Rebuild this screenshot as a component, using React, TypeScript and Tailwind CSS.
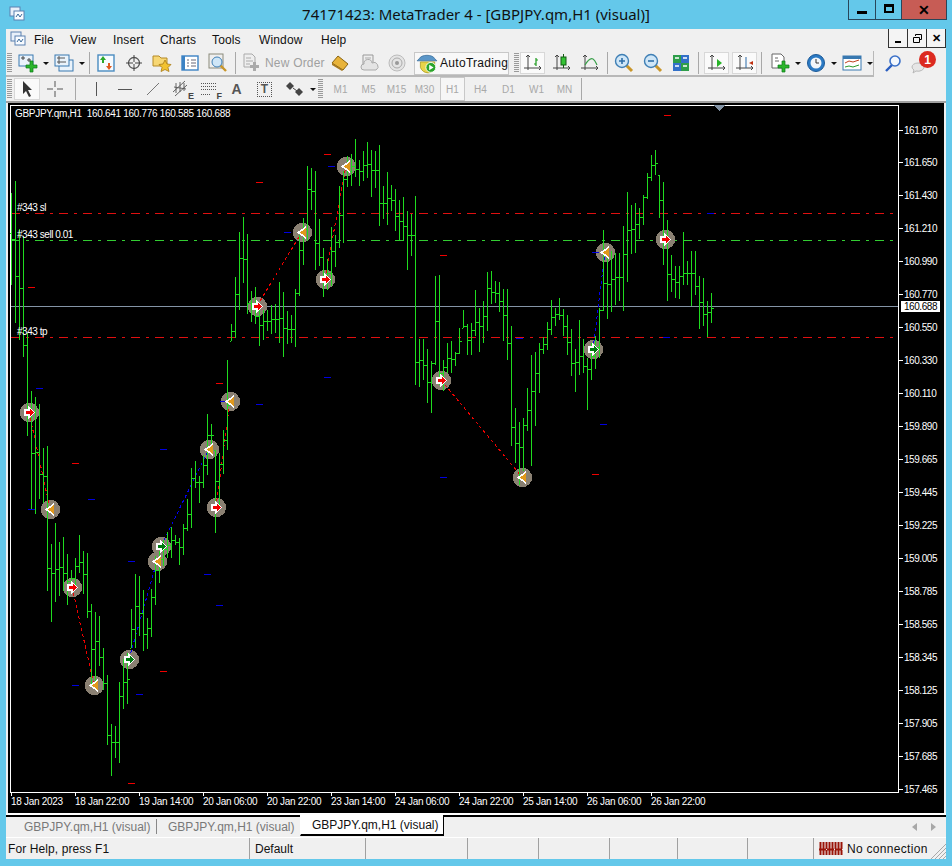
import type { ReactNode } from 'react'

const bars: [number, number][] = [
    [195, 287], [183, 325], [231, 342], [238, 359], [335, 438], [393, 511], [399, 516], [406, 501], [450, 505], [448, 593],
    [546, 624], [525, 604], [544, 598], [539, 593], [556, 607], [572, 593], [560, 587], [537, 575], [553, 596], [555, 620],
    [606, 687], [614, 692], [618, 668], [650, 692], [677, 747], [726, 778], [728, 760], [684, 765], [661, 711], [655, 706],
    [611, 650], [576, 650], [578, 638], [592, 653], [620, 651], [591, 639], [558, 607], [553, 585], [542, 568], [534, 560],
    [529, 560], [537, 547], [540, 567], [526, 557], [501, 533], [470, 530], [463, 490], [478, 505], [457, 490], [416, 477],
    [426, 447], [452, 535], [455, 510], [432, 476], [362, 452], [326, 343], [279, 340], [234, 312], [219, 285], [236, 316],
    [293, 324], [289, 326], [310, 348], [312, 342], [312, 333], [307, 336], [306, 335], [284, 345], [294, 359], [313, 346],
    [317, 345], [291, 349], [237, 298], [220, 267], [168, 242], [170, 212], [173, 272], [221, 268], [250, 299], [261, 292],
    [229, 288], [237, 269], [188, 250], [173, 245], [158, 189], [156, 188], [141, 179], [162, 188], [153, 183], [144, 180],
    [152, 199], [153, 190], [147, 228], [188, 221], [174, 227], [187, 213], [191, 233], [202, 243], [199, 243], [213, 272],
    [216, 258], [198, 387], [341, 389], [341, 382], [351, 405], [363, 415], [278, 367], [277, 387], [362, 393], [345, 375],
    [343, 375], [354, 368], [330, 356], [312, 330], [326, 357], [325, 357], [292, 338], [310, 354], [303, 345], [274, 333],
    [273, 306], [283, 305], [284, 314], [291, 343], [291, 362], [328, 448], [410, 465], [424, 487], [420, 473], [390, 433],
    [357, 468], [354, 428], [345, 395], [339, 356], [324, 352], [302, 337], [310, 328], [300, 322], [311, 338], [317, 357],
    [331, 378], [351, 394], [322, 377], [341, 375], [360, 412], [345, 382], [338, 371], [310, 360], [232, 313], [257, 321],
    [253, 314], [255, 307], [255, 303], [228, 313], [194, 284], [207, 256], [205, 255], [210, 241], [197, 227], [175, 201],
    [157, 183], [152, 177], [177, 220], [184, 267], [222, 303], [257, 294], [268, 300], [268, 301], [234, 287], [263, 287],
    [253, 308], [253, 297], [278, 331], [280, 328], [303, 339], [295, 325],
]

const prices = [
    ['161.870', 132], ['161.650', 164], ['161.430', 197], ['161.210', 230], ['160.990', 263], ['160.770', 296], ['160.550', 329],
    ['160.330', 362], ['160.110', 395], ['159.890', 428], ['159.665', 461], ['159.445', 494], ['159.225', 527], ['159.005', 560],
    ['158.785', 593], ['158.565', 626], ['158.345', 659], ['158.125', 692], ['157.905', 725], ['157.685', 758], ['157.465', 791],
] as const

const times = [
    '18 Jan 2023', '18 Jan 22:00', '19 Jan 14:00', '20 Jan 06:00', '20 Jan 22:00', '23 Jan 14:00', '24 Jan 06:00', '24 Jan 22:00',
    '25 Jan 14:00', '26 Jan 06:00', '26 Jan 22:00',
]

const redMarks = [[28, 289], [256, 184], [324, 156], [440, 257], [72, 465], [216, 385], [160, 673], [128, 785], [664, 117], [592, 476]]
const blueMarks = [
    [328, 168], [284, 234], [36, 390], [88, 501], [28, 511], [160, 451], [128, 563], [204, 576], [220, 403], [216, 607], [72, 687],
    [136, 696], [324, 379], [256, 406], [707, 215], [663, 339], [592, 254], [516, 340], [600, 426], [440, 479],
]

const sellTrades = [[29, 414, 50, 511], [72, 589, 94, 687], [216, 509, 230, 403], [257, 308, 302, 234], [325, 281, 346, 168], [441, 382, 522, 479]]
const buyTrades = [[129, 661, 157, 563], [161, 548, 209, 451], [593, 351, 605, 254]]

const redArrows = [[29, 414], [72, 589], [216, 509], [257, 308], [325, 281], [441, 382], [665, 241]]
const orangeArrows = [[50, 511], [94, 687], [157, 563], [209, 451], [230, 403], [302, 234], [346, 168], [522, 479], [605, 254]]
const greenArrows = [[161, 548], [129, 661], [593, 351]]

function barsPath() {
    let d = ''
    let prevClose = bars[0][0] + 40
    bars.forEach(([high, low], i) => {
        const x = 11 + i * 4
        const next = bars[i + 1] ?? [high, low]
        const top = Math.max(high, next[0])
        const bottom = Math.min(low, next[1])
        const close = Math.round(top < bottom ? (top + bottom) / 2 : (high + low) / 2)
        const open = Math.min(low, Math.max(high, prevClose))
        d += `M${x}.5 ${high}V${low}M${x - 1} ${open}.5h1M${x + 1} ${close}.5h2`
        prevClose = close
    })
    return d
}

function RightArrow({ x, y, color }: { x: number; y: number; color: string }) {
    return (
        <g transform={`translate(${x} ${y})`} shapeRendering="crispEdges">
            <polygon points="-5,-3 -1,-3 -1,-6 6,0.5 -1,7 -1,4 -5,4" fill="#fff" />
            <polygon points="-3,-1 1,-1 1,-3 5,0.5 1,4 1,2 -3,2" fill={color} />
        </g>
    )
}

function LeftArrow({ x, y }: { x: number; y: number }) {
    return (
        <g transform={`translate(${x} ${y})`} shapeRendering="crispEdges">
            <polygon points="4,-6 4,7 -5,0.5" fill="#fff" />
            <polygon points="4,-4 4,5 -2,0.5" fill="#e0981c" />
        </g>
    )
}

function Chart() {
    return (
        <svg width="936" height="710" viewBox="8 105 936 710" className="block bg-black" fontFamily="'Liberation Sans', sans-serif">
            <g shapeRendering="crispEdges">
                <path d="M10.5 107V794.5H898.5V107M10 107.5H899" fill="none" stroke="#fff" />
                {prices.map(([, y]) => (
                    <path key={y} d={`M899 ${y}.5h4`} stroke="#fff" />
                ))}
                {times.map((_, i) => (
                    <path key={i} d={`M${11 + i * 64}.5 795v3`} stroke="#fff" />
                ))}

                <path d="M11 215.5H894" stroke="#e01010" strokeDasharray="9 6 3 6" />
                <path d="M11 242.5H894" stroke="#32cd32" strokeDasharray="9 6 3 6" />
                <path d="M11 339.5H894" stroke="#e01010" strokeDasharray="9 6 3 6" />
                <path d="M11 308.5H898" stroke="#8494a6" />
                <polygon points="714,107 725,107 719.5,113" fill="#8494a6" />

                {[...redArrows, ...orangeArrows, ...greenArrows].map(([x, y]) => (
                    <circle key={`${x}-${y}`} cx={x + 0.5} cy={y + 0.5} r="9.6" fill="#8a8072" />
                ))}
                {sellTrades.map(([x1, y1, x2, y2]) => (
                    <line key={x1} x1={x1} y1={y1} x2={x2} y2={y2} stroke="#f00000" strokeDasharray="3 3" />
                ))}
                {buyTrades.map(([x1, y1, x2, y2]) => (
                    <line key={x1} x1={x1} y1={y1} x2={x2} y2={y2} stroke="#0000f0" strokeDasharray="3 3" />
                ))}

                <path d={barsPath()} stroke="#1fdc1f" fill="none" />

                {redMarks.map(([x, y]) => (
                    <path key={`${x}-${y}`} d={`M${x} ${y}.5h7`} stroke="#f00000" />
                ))}
                {blueMarks.map(([x, y]) => (
                    <path key={`${x}-${y}`} d={`M${x} ${y}.5h7`} stroke="#0000e0" />
                ))}
            </g>

            {redArrows.map(([x, y]) => (
                <RightArrow key={x} x={x} y={y} color="#f00000" />
            ))}
            {greenArrows.map(([x, y]) => (
                <RightArrow key={x} x={x} y={y} color="#007a10" />
            ))}
            {orangeArrows.map(([x, y]) => (
                <LeftArrow key={x} x={x} y={y} />
            ))}

            <g fill="#fff" fontSize="10" letterSpacing="-0.45">
                <text x="15" y="119" letterSpacing="-0.3">GBPJPY.qm,H1&#160; 160.641 160.776 160.585 160.688</text>
                <text x="17" y="213">#343 sl</text>
                <text x="17" y="240">#343 sell 0.01</text>
                <text x="17" y="337">#343 tp</text>
                {prices.map(([p, y]) => (
                    <text key={p} x="904" y={y + 4}>{p}</text>
                ))}
                {times.map((t, i) => (
                    <text key={t} x={11 + i * 64} y="807" letterSpacing="-0.3">{t}</text>
                ))}
                <rect x="901" y="303" width="39" height="11" />
                <text x="904" y="312" fill="#000">160.688</text>
            </g>
        </svg>
    )
}

function Ico({ children, size = 20 }: { children: ReactNode; size?: number }) {
    return (
        <svg width={size} height={size} viewBox="0 0 20 20" className="block shrink-0">
            {children}
        </svg>
    )
}

const Axes = () => (
    <path d="M5 2v15M1 15h17M3 4l2-2 2 2M16 13l2 2-2 2" fill="none" stroke="#444" strokeWidth="1" />
)

function PlusGreen({ x = 0, y = 0 }: { x?: number; y?: number }) {
    return (
        <path
            transform={`translate(${x} ${y})`}
            d="M6 0h3v4h4v3H9v4H6V7H2V4h4z"
            fill="#2bb52b"
            stroke="#0a7a18"
            strokeWidth="0.7"
        />
    )
}

function Magnifier({ minus }: { minus?: boolean }) {
    return (
        <Ico>
            <path d="M12 12l6 6" stroke="#c9962a" strokeWidth="3" />
            <circle cx="8" cy="8" r="6.5" fill="#cfe6f7" stroke="#3f7fb5" strokeWidth="1.4" />
            <path d={minus ? 'M5 8h6' : 'M5 8h6M8 5v6'} stroke="#2f6fa8" strokeWidth="1.6" />
        </Ico>
    )
}

const icons = {
    chartAdd: (
        <Ico>
            <rect x="1" y="2" width="14" height="11" fill="#eaf3fb" stroke="#3878b0" />
            <path d="M3 5h4M5 3v4M9 7h4M11 5v4" stroke="#444" />
            <PlusGreen x={6} y={8} />
        </Ico>
    ),
    profiles: (
        <Ico>
            <rect x="5" y="7" width="14" height="11" fill="#eaf3fb" stroke="#3878b0" />
            <rect x="1" y="2" width="14" height="11" fill="#eaf3fb" stroke="#3878b0" />
            <path d="M3 5h8M3 9h9M5 3v8" stroke="#555" />
        </Ico>
    ),
    market: (
        <Ico>
            <rect x="2" y="2" width="16" height="16" fill="#f6fbff" stroke="#4a8cc0" strokeWidth="1.4" />
            <path d="M7 3l3 4H8v3H6V7H4z" fill="#2aa82a" />
            <path d="M13 17l-3-4h2v-3h2v3h2z" fill="#e05a20" />
        </Ico>
    ),
    crosshair: (
        <Ico>
            <circle cx="10" cy="10" r="5.5" fill="none" stroke="#555" strokeWidth="1.3" />
            <path d="M10 2v7M10 11v7M2 10h7M11 10h7" stroke="#444" />
        </Ico>
    ),
    folder: (
        <Ico>
            <path d="M1 3h6l2 2h6v8H1z" fill="#f7d774" stroke="#b58a26" />
            <path d="M13 7l2 4 4 .5-3 3 1 4-4-2-4 2 1-4-3-3 4-.5z" fill="#f2c230" stroke="#a87a14" strokeWidth="0.8" />
        </Ico>
    ),
    terminal: (
        <Ico>
            <rect x="2" y="3" width="16" height="14" fill="#fff" stroke="#3b82c4" strokeWidth="1.4" />
            <rect x="2" y="3" width="3" height="14" fill="#3b82c4" />
            <path d="M7 7h2M11 7h5M7 10h2M11 10h5M7 13h2M11 13h5" stroke="#667" />
        </Ico>
    ),
    tester: (
        <Ico>
            <rect x="1" y="1" width="14" height="14" fill="#eee" stroke="#8a8a7a" />
            <path d="M12 12l6 6" stroke="#c9962a" strokeWidth="2.4" />
            <circle cx="9" cy="9" r="5" fill="#cfe6f7" stroke="#3f7fb5" />
        </Ico>
    ),
    newOrder: (
        <Ico>
            <path d="M2 1h8l3 3v10H2z" fill="#eee" stroke="#aaa" />
            <path d="M4 5h5M4 8h7M4 11h4" stroke="#aaa" />
            <path d="M11 9h3v3h3v3h-3v3h-3v-3H8v-3h3z" fill="#aaa" />
        </Ico>
    ),
    goldBox: (
        <Ico>
            <path d="M8 3l10 8-5 6L2 10z" fill="#e8b33a" stroke="#8a6410" />
            <path d="M2 10l11 7-1 1L2 12z" fill="#a87a20" />
        </Ico>
    ),
    cloudDoc: (
        <Ico>
            <path d="M4 2h10v10H4z" fill="#eee" stroke="#999" />
            <path d="M6 5h6M6 8h6" stroke="#aaa" />
            <path d="M5 17a3 3 0 010-6 4 4 0 018-1 3.5 3.5 0 014 7z" fill="#e4e4e4" stroke="#aaa" />
        </Ico>
    ),
    signal: (
        <Ico>
            <circle cx="10" cy="10" r="8" fill="#e4e4e4" stroke="#bbb" />
            <circle cx="10" cy="10" r="5" fill="none" stroke="#aaa" />
            <circle cx="10" cy="10" r="2" fill="#999" />
        </Ico>
    ),
    auto: (
        <Ico size={22}>
            <path d="M3 6c2-4 12-4 14 0l2 2H1z" fill="#5a96c8" stroke="#3a6e9c" strokeWidth="0.7" />
            <path d="M4 9h13v6c-2 3-4 4-6 4-3 0-6-2-7-5z" fill="#e8d44a" stroke="#a89a20" strokeWidth="0.7" />
            <circle cx="13.5" cy="14" r="4.5" fill="#2aa52a" stroke="#fff" strokeWidth="0.8" />
            <path d="M12 11.5l4 2.5-4 2.5z" fill="#fff" />
        </Ico>
    ),
    barChart: (
        <Ico>
            <Axes />
            <path d="M13 5v8M11 11h2M13 7h2" stroke="#1c9a1c" strokeWidth="1.2" fill="none" />
        </Ico>
    ),
    candle: (
        <Ico>
            <Axes />
            <rect x="9" y="4" width="5" height="8" fill="#34c334" stroke="#145a14" />
            <path d="M11.5 1v3M11.5 12v3" stroke="#145a14" />
        </Ico>
    ),
    line: (
        <Ico>
            <Axes />
            <path d="M5 12c3-5 6-7 8-6s3 4 4 6" fill="none" stroke="#3aa04a" strokeWidth="1.2" />
        </Ico>
    ),
    tile: (
        <Ico>
            <rect x="2" y="2" width="8" height="8" fill="#2e9e4a" />
            <rect x="10" y="2" width="8" height="8" fill="#3270c8" />
            <rect x="2" y="10" width="8" height="8" fill="#3270c8" />
            <rect x="10" y="10" width="8" height="8" fill="#2e9e4a" />
            <path d="M4 5h4M12 5h4M4 13h4M12 13h4" stroke="#fff" strokeWidth="1.5" />
        </Ico>
    ),
    autoScroll: (
        <Ico>
            <Axes />
            <path d="M10 6l5 4-5 4z" fill="#28b428" />
        </Ico>
    ),
    shift: (
        <Ico>
            <Axes />
            <path d="M11 4v11" stroke="#2a6aa8" />
            <path d="M18 8l-4 2 4 2z" fill="#c03010" />
        </Ico>
    ),
    template: (
        <Ico>
            <path d="M2 1h9l3 3v11H2z" fill="#fff" stroke="#666" />
            <path d="M5 5h3M5 8h4" stroke="#666" />
            <PlusGreen x={6} y={8} />
        </Ico>
    ),
    clock: (
        <Ico>
            <circle cx="10" cy="10" r="8.5" fill="#2b7ac4" stroke="#1c5a98" />
            <circle cx="10" cy="10" r="5.5" fill="#f2f6fa" />
            <path d="M10 6v4h3" fill="none" stroke="#333" />
        </Ico>
    ),
    indicator: (
        <Ico>
            <rect x="1" y="3" width="18" height="14" fill="#fff" stroke="#3878b0" />
            <rect x="1" y="3" width="18" height="3" fill="#3878b0" />
            <path d="M3 10l4-2 4 1 6-2" fill="none" stroke="#c04020" />
            <path d="M3 14l4-1 4 1 6-2" fill="none" stroke="#2a9a2a" />
        </Ico>
    ),
    search: (
        <Ico>
            <path d="M9 11l-6 6" stroke="#2a5ec0" strokeWidth="2.4" />
            <circle cx="12" cy="7" r="5" fill="#f4f8fd" stroke="#3a70c8" strokeWidth="1.6" />
        </Ico>
    ),
    cursor: (
        <Ico>
            <path d="M6 2l9 9h-4l3 6-2 1-3-6-3 3z" fill="#333" />
        </Ico>
    ),
    thinCross: (
        <Ico>
            <path d="M10 2v6M10 12v6M2 10h6M12 10h6" stroke="#555" />
        </Ico>
    ),
    vline: (
        <Ico>
            <path d="M10.5 3v14" stroke="#555" />
        </Ico>
    ),
    hline: (
        <Ico>
            <path d="M3 10.5h14" stroke="#555" />
        </Ico>
    ),
    trend: (
        <Ico>
            <path d="M4 16L16 4" stroke="#777" />
        </Ico>
    ),
    updown: (
        <Ico>
            <path d="M5 3l4 4-4 4-4-4z" fill="#444" />
            <path d="M14 9l4 4-4 4-4-4z" fill="#444" />
            <path d="M8 9l4 3" stroke="#444" />
        </Ico>
    ),
}

function Caret() {
    return <span className="ml-[5px] h-0 w-0 border-x-[3px] border-t-[3px] border-x-transparent border-t-[#111]" />
}

function Tool({ w, children, active }: { w: string; children: ReactNode; active?: boolean }) {
    return (
        <div
            className={`flex h-[22px] shrink-0 items-center justify-center ${w} ${active ? 'border border-[#d8d8d8] bg-[#fafafa]' : ''}`}
        >
            {children}
        </div>
    )
}

function Sep({ w = 'w-[6px]' }: { w?: string }) {
    return (
        <div className={`flex h-[22px] shrink-0 justify-center ${w}`}>
            <div className="w-px bg-[#a8a8a8]" />
        </div>
    )
}

function Grip() {
    return (
        <div className="h-[20px] w-[5px] shrink-0 bg-[repeating-linear-gradient(to_bottom,#9a9a9a_0,#9a9a9a_1px,transparent_1px,transparent_2px)]" />
    )
}

function ToolbarOne() {
    return (
        <div className="flex h-[26px] items-center">
            <div className="flex h-[26px] w-[868px] items-center border-r border-b-2 border-[#b8b8b8]">
                <div className="ml-px"><Grip /></div>
                <Tool w="w-[36px] pl-[6px]">{icons.chartAdd}<Caret /></Tool>
                <Tool w="w-[38px] pl-[4px]">{icons.profiles}<Caret /></Tool>
                <Sep />
                <Tool w="w-[28px]">{icons.market}</Tool>
                <Tool w="w-[28px]">{icons.crosshair}</Tool>
                <Tool w="w-[28px]">{icons.folder}</Tool>
                <Tool w="w-[28px]">{icons.terminal}</Tool>
                <Tool w="w-[28px]">{icons.tester}</Tool>
                <Sep />
                <Tool w="w-[88px] justify-start pl-[4px] gap-[3px] text-[#a0a0a0] tracking-[0.2px]">
                    {icons.newOrder}
                    <span>New Order</span>
                </Tool>
                <Tool w="w-[28px]">{icons.goldBox}</Tool>
                <Tool w="w-[29px]">{icons.cloudDoc}</Tool>
                <Tool w="w-[28px]">{icons.signal}</Tool>
                <div className="ml-[3px] flex h-[23px] w-[95px] shrink-0 items-center gap-[2px] border border-[#c8c8c8] bg-[#f8f8f8] pl-[1px] text-[#111] tracking-[0.3px]">
                    {icons.auto}
                    <span>AutoTrading</span>
                </div>
                <div className="ml-[5px] mr-[1px]"><Grip /></div>
                <Tool w="w-[25px]" active>{icons.barChart}</Tool>
                <Tool w="w-[28px] ml-[3px]">{icons.candle}</Tool>
                <Tool w="w-[28px]">{icons.line}</Tool>
                <Sep />
                <Tool w="w-[28px]"><Magnifier /></Tool>
                <Tool w="w-[29px]"><Magnifier minus /></Tool>
                <Tool w="w-[28px]">{icons.tile}</Tool>
                <Sep w="w-[6px]" />
                <Tool w="w-[25px] ml-[3px]" active>{icons.autoScroll}</Tool>
                <Tool w="w-[25px] ml-[3px]" active>{icons.shift}</Tool>
                <Sep w="w-[9px]" />
                <Tool w="w-[34px] pl-[4px]">{icons.template}<Caret /></Tool>
                <Tool w="w-[36px] pl-[6px]">{icons.clock}<Caret /></Tool>
                <Tool w="w-[36px] pl-[6px]">{icons.indicator}<Caret /></Tool>
            </div>
            <div className="ml-[9px]">{icons.search}</div>
            <div className="relative ml-[8px] h-[24px] w-[30px]">
                <svg width="14" height="12" viewBox="0 0 14 12" className="absolute left-0 top-[10px]">
                    <path d="M1 5a6 4 0 0112 0 6 4 0 01-8 4l-3 2 1-3a5 4 0 01-2-3z" fill="#e6e6e6" stroke="#b8b8b8" />
                </svg>
                <div className="absolute left-[8px] top-[-1px] flex h-[17px] w-[17px] items-center justify-center rounded-full bg-[#dc2a20] text-[12px] font-bold text-white">
                    1
                </div>
            </div>
        </div>
    )
}

function Period({ label, active }: { label: string; active?: boolean }) {
    return (
        <div
            className={`flex h-[24px] w-[25px] shrink-0 items-center justify-center text-[10px] text-[#a8a8a8] ${active ? 'border border-[#c8c8c8] bg-[#f6f6f6]' : ''}`}
        >
            {label}
        </div>
    )
}

function ToolbarTwo() {
    return (
        <div className="flex h-[26px] items-center border-b-2 border-[#a0a0a0]">
            <div className="ml-px"><Grip /></div>
            <Tool w="w-[26px] ml-[2px]" active>{icons.cursor}</Tool>
            <Tool w="w-[28px] ml-[1px]">{icons.thinCross}</Tool>
            <Sep w="w-[8px] ml-[2px]" />
            <Tool w="w-[29px] ml-[2px]">{icons.vline}</Tool>
            <Tool w="w-[29px]">{icons.hline}</Tool>
            <Tool w="w-[28px]">{icons.trend}</Tool>
            <Tool w="w-[28px]">
                <div className="relative h-[20px] w-[20px]">
                    <svg width="20" height="20" viewBox="0 0 20 20" className="block">
                        <path d="M2 13L14 2M4 17L16 6M3 8l12 2M5 4v10M9 3v10M13 4v8" stroke="#555" fill="none" strokeWidth="0.9" />
                    </svg>
                    <span className="absolute right-[-3px] bottom-[-2px] text-[9px] font-bold leading-none text-[#444]">E</span>
                </div>
            </Tool>
            <Tool w="w-[28px]">
                <div className="relative h-[20px] w-[20px]">
                    <svg width="20" height="20" viewBox="0 0 20 20" className="block">
                        <path d="M2 4.500h15M2 7.500h15M2 10.500h15M2 15.500h10" stroke="#555" strokeDasharray="1 1" />
                    </svg>
                    <span className="absolute right-[-3px] bottom-[-2px] text-[9px] font-bold leading-none text-[#444]">F</span>
                </div>
            </Tool>
            <Tool w="w-[27px]"><span className="text-[14px] font-bold text-[#555]">A</span></Tool>
            <Tool w="w-[29px]">
                <span className="flex h-[15px] w-[15px] items-center justify-center border border-dotted border-[#555] text-[12px] font-bold leading-none text-[#555]">T</span>
            </Tool>
            <Tool w="w-[36px] pl-[6px]">{icons.updown}<Caret /></Tool>
            <div className="ml-[3px] mr-[5px]"><Grip /></div>
            <Period label="M1" />
            <div className="ml-[3px]"><Period label="M5" /></div>
            <div className="ml-[3px]"><Period label="M15" /></div>
            <div className="ml-[3px]"><Period label="M30" /></div>
            <div className="ml-[3px]"><Period label="H1" active /></div>
            <div className="ml-[3px]"><Period label="H4" /></div>
            <div className="ml-[3px]"><Period label="D1" /></div>
            <div className="ml-[3px]"><Period label="W1" /></div>
            <div className="ml-[3px]"><Period label="MN" /></div>
            <Sep w="w-[6px] ml-[1px]" />
        </div>
    )
}

function MdiButton({ children }: { children: ReactNode }) {
    return (
        <div className="flex h-[19px] w-[19px] items-center justify-center border-l border-b border-[#333] bg-[#f4f4f4] first:border-l">
            {children}
        </div>
    )
}

function TitleBar() {
    return (
        <div className="relative flex h-[29px] shrink-0 items-center justify-center font-['Noto_Sans',sans-serif] text-[15px] text-[#111]">
            <svg width="16" height="16" viewBox="0 0 16 16" className="absolute left-[9px] top-[6px]">
                <rect x="1" y="1" width="10" height="9" fill="#e8f0fa" stroke="#5a80b0" />
                <rect x="5" y="5" width="10" height="9" fill="#f8fbff" stroke="#5a80b0" />
                <path d="M7 11l2-3 2 3 2-3" fill="none" stroke="#3a6a9a" />
            </svg>
            <span className="mt-[-1px]">74171423: MetaTrader 4 - [GBPJPY.qm,H1 (visual)]</span>
            <div className="absolute right-[5px] top-0 flex h-[20px] border-x border-b border-[#28465a]">
                <div className="flex w-[27px] items-center justify-center border-r border-[#28465a]">
                    <div className="mt-[6px] h-[3px] w-[10px] bg-black" />
                </div>
                <div className="flex w-[26px] items-center justify-center border-r border-[#28465a]">
                    <div className="mt-[-2px] h-[9px] w-[10px] border-2 border-t-[3px] border-black" />
                </div>
                <div className="flex w-[44px] items-center justify-center bg-[#c75c55]">
                    <span className="text-[14px] font-bold leading-none text-black">✕</span>
                </div>
            </div>
        </div>
    )
}

function MenuBar() {
    return (
        <div className="relative flex h-[22px] items-center">
            <svg width="16" height="16" viewBox="0 0 16 16" className="absolute left-[4px] top-[2px]">
                <rect x="1" y="1" width="10" height="9" fill="#e8f0fa" stroke="#5a80b0" />
                <rect x="5" y="5" width="10" height="9" fill="#f8fbff" stroke="#5a80b0" />
                <path d="M7 11l2-3 2 3 2-3" fill="none" stroke="#3a6a9a" />
            </svg>
            <div className="ml-[28px] flex tracking-[0.15px] text-[#111]">
                <span className="w-[36px]">File</span>
                <span className="w-[43px]">View</span>
                <span className="w-[47px]">Insert</span>
                <span className="w-[52px]">Charts</span>
                <span className="w-[47px]">Tools</span>
                <span className="w-[62px]">Window</span>
                <span>Help</span>
            </div>
            <div className="absolute right-0 top-0 flex border-r border-[#333]">
                <MdiButton><div className="mt-[7px] h-[2px] w-[6px] bg-black" /></MdiButton>
                <MdiButton>
                    <svg width="11" height="11" viewBox="0 0 11 11">
                        <path d="M3.500 3V1.500h6v5H8M1.500 4.500h6v5h-6z" fill="none" stroke="#000" />
                    </svg>
                </MdiButton>
                <MdiButton><span className="text-[11px] font-bold leading-none">✕</span></MdiButton>
            </div>
        </div>
    )
}

function Tabs() {
    return (
        <div className="flex h-[21px] items-stretch border-t-2 border-black text-[#787878]">
            <div className="flex w-[150px] items-center pl-[18px]">GBPJPY.qm,H1 (visual)</div>
            <div className="my-[2px] w-px bg-[#888]" />
            <div className="flex w-[143px] items-center pl-[11px]">GBPJPY.qm,H1 (visual)</div>
            <div className="mt-[-2px] flex w-[144px] items-center border-x border-b-2 border-black border-l-white bg-white pl-[11px] text-[#111]">
                GBPJPY.qm,H1 (visual)
            </div>
            <div className="flex flex-1 items-center justify-end gap-[14px] pr-[10px]">
                <span className="h-0 w-0 border-y-[4px] border-r-[5px] border-y-transparent border-r-[#a8a8a8]" />
                <span className="h-0 w-0 border-y-[4px] border-l-[5px] border-y-transparent border-l-[#a8a8a8]" />
            </div>
        </div>
    )
}

function StatusBar() {
    const cells = ['w-[116px]', 'w-[102px]', 'w-[71px]', 'w-[71px]', 'w-[68px]', 'w-[70px]', 'w-[66px]']
    return (
        <div className="mt-px flex h-[22px] items-stretch border-t border-white text-[#111]">
            <div className="flex w-[244px] items-center border-r border-[#a0a0a0] pl-[2px] tracking-[0.1px]">For Help, press F1</div>
            <div className="flex w-[116px] items-center border-r border-[#a0a0a0] pl-[5px]">Default</div>
            {cells.slice(1).map((w, i) => (
                <div key={i} className={`border-r border-[#a0a0a0] ${w}`} />
            ))}
            <div className="relative flex flex-1 items-center pl-[5px]">
                <svg width="24" height="13" viewBox="0 0 24 13" className="block">
                    <path
                        d="M1.500 0v13M4.500 0v13M7.500 0v13M10.500 0v13M13.500 0v13M16.500 0v13M19.500 0v13M22.500 0v13M0 7.500h24"
                        stroke="#9a1408"
                        strokeWidth="2"
                        strokeDasharray="7 1"
                    />
                </svg>
                <span className="ml-[4px] tracking-[0.3px]">No connection</span>
                <svg width="15" height="15" viewBox="0 0 15 15" className="absolute bottom-0 right-0">
                    <path d="M0 15L15 0M4 15L15 4M8 15l7-7M12 15l3-3" stroke="#a8a8a8" />
                </svg>
            </div>
        </div>
    )
}

export default function App() {
    return (
        <div className="flex h-[866px] w-[952px] flex-col overflow-hidden bg-[#64c8ea] font-['Liberation_Sans',sans-serif] text-[12px]">
            <TitleBar />
            <div className="mx-[6px] flex flex-col bg-[#f0f0f0]">
                <MenuBar />
                <ToolbarOne />
                <ToolbarTwo />
                <div className="flex h-[710px] pl-[2px] pr-[1px]">
                    <Chart />
                </div>
                <div className="h-[2px] bg-white" />
                <Tabs />
                <StatusBar />
            </div>
        </div>
    )
}
